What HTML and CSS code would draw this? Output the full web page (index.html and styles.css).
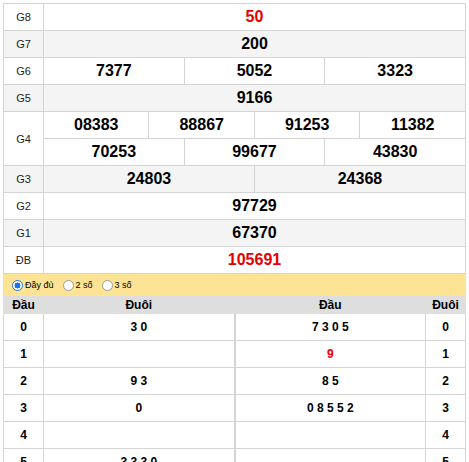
FILE: index.html
```html
<!DOCTYPE html>
<html>
<head>
<meta charset="utf-8">
<link rel="stylesheet" href="styles.css">
</head>
<body>
<div class="wrap">
  <table class="kq">
    <colgroup>
      <col class="c-label">
      <col><col><col><col><col><col><col><col><col><col><col><col>
    </colgroup>
    <tbody>
      <tr class="odd"><td class="lbl">G8</td><td colspan="12" class="num red">50</td></tr>
      <tr class="even"><td class="lbl">G7</td><td colspan="12" class="num">200</td></tr>
      <tr class="odd"><td class="lbl">G6</td><td colspan="4" class="num">7377</td><td colspan="4" class="num">5052</td><td colspan="4" class="num">3323</td></tr>
      <tr class="even"><td class="lbl">G5</td><td colspan="12" class="num">9166</td></tr>
      <tr class="odd"><td class="lbl" rowspan="2">G4</td><td colspan="3" class="num">08383</td><td colspan="3" class="num">88867</td><td colspan="3" class="num">91253</td><td colspan="3" class="num">11382</td></tr>
      <tr class="odd"><td colspan="4" class="num">70253</td><td colspan="4" class="num">99677</td><td colspan="4" class="num">43830</td></tr>
      <tr class="even"><td class="lbl">G3</td><td colspan="6" class="num">24803</td><td colspan="6" class="num">24368</td></tr>
      <tr class="odd"><td class="lbl">G2</td><td colspan="12" class="num">97729</td></tr>
      <tr class="even"><td class="lbl">G1</td><td colspan="12" class="num">67370</td></tr>
      <tr class="odd"><td class="lbl">ĐB</td><td colspan="12" class="num red">105691</td></tr>
    </tbody>
  </table>

  <div class="opts">
    <label class="opt"><span class="radio on"></span>Đầy đủ</label>
    <label class="opt"><span class="radio"></span>2 số</label>
    <label class="opt"><span class="radio"></span>3 số</label>
  </div>

  <div class="loto">
    <table class="lt left">
      <colgroup><col class="c-head"><col></colgroup>
      <thead><tr><th>Đầu</th><th>Đuôi</th></tr></thead>
      <tbody>
        <tr><td class="k">0</td><td>3 0</td></tr>
        <tr><td class="k">1</td><td></td></tr>
        <tr><td class="k">2</td><td>9 3</td></tr>
        <tr><td class="k">3</td><td>0</td></tr>
        <tr><td class="k">4</td><td></td></tr>
        <tr><td class="k">5</td><td>3 3 3 0</td></tr>
        <tr><td class="k">6</td><td>8 7 6</td></tr>
        <tr><td class="k">7</td><td>7 7 0</td></tr>
        <tr><td class="k">8</td><td>3 2</td></tr>
        <tr><td class="k">9</td><td><span class="red">1</span></td></tr>
      </tbody>
    </table>
    <table class="lt right">
      <colgroup><col><col class="c-tail"></colgroup>
      <thead><tr><th>Đầu</th><th>Đuôi</th></tr></thead>
      <tbody>
        <tr><td>7 3 0 5</td><td class="k">0</td></tr>
        <tr><td><span class="red">9</span></td><td class="k">1</td></tr>
        <tr><td>8 5</td><td class="k">2</td></tr>
        <tr><td>0 8 5 5 2</td><td class="k">3</td></tr>
        <tr><td></td><td class="k">4</td></tr>
        <tr><td></td><td class="k">5</td></tr>
        <tr><td>6</td><td class="k">6</td></tr>
        <tr><td>7 7 6</td><td class="k">7</td></tr>
        <tr><td>6 8</td><td class="k">8</td></tr>
        <tr><td>2</td><td class="k">9</td></tr>
      </tbody>
    </table>
  </div>
</div>
</body>
</html>
```

FILE: styles.css
```css
html, body {
  margin: 0;
  padding: 0;
  background: #fff;
}
body {
  font-family: "Liberation Sans", Arial, sans-serif;
  color: #000;
  overflow: hidden;
}
.wrap {
  padding: 3px;
}
.kq {
  width: 100%;
  border-collapse: collapse;
  table-layout: fixed;
}
.kq .c-label {
  width: 40px;
}
.kq td {
  border: 1px solid #d4d4d4;
  height: 26px;
  padding: 0;
  text-align: center;
  vertical-align: middle;
}
.kq tr.even td {
  background: #f4f4f4;
}
.kq .lbl {
  font-size: 11px;
  color: #222;
}
.kq .num {
  font-size: 16px;
  font-weight: bold;
}
.red {
  color: #e60000;
}
.opts {
  display: flex;
  align-items: center;
  gap: 9px;
  height: 22px;
  padding-left: 9px;
  background: #fde394;
  font-size: 9px;
}
.opt {
  display: flex;
  align-items: center;
  gap: 2px;
}
.radio {
  box-sizing: border-box;
  width: 11px;
  height: 11px;
  border-radius: 50%;
  border: 1px solid #9a9a9a;
  background: #fff;
}
.radio.on {
  border-color: #1a73e8;
  background: radial-gradient(circle, #1a73e8 0 2.8px, #fff 3.2px);
}
.loto {
  display: flex;
}
.lt {
  width: 50%;
  border-collapse: collapse;
  table-layout: fixed;
  border: 1px solid #d4d4d4;
}
.lt .c-head {
  width: 40px;
}
.lt .c-tail {
  width: 40px;
}
.lt th {
  height: 16px;
  padding: 0;
  background: #dedede;
  font-size: 12px;
  font-weight: bold;
  border: 1px solid #dedede;
}
.lt td {
  height: 26px;
  padding: 0;
  border: 1px solid #d4d4d4;
  text-align: center;
  font-size: 12px;
  font-weight: bold;
}
```
